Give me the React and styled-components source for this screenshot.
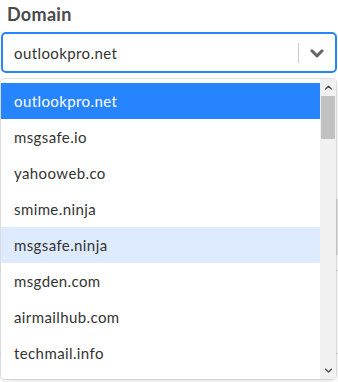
import styled, { createGlobalStyle } from "styled-components";

const GlobalStyle = createGlobalStyle`
    html, body {
        margin: 0;
        padding: 0;
        background: #ffffff;
        font-family: Lato, "Open Sans", sans-serif;
    }
`;

const OPTIONS = [
    "outlookpro.net",
    "msgsafe.io",
    "yahooweb.co",
    "smime.ninja",
    "msgsafe.ninja",
    "msgden.com",
    "airmailhub.com",
    "techmail.info",
];

const StPage = styled.div`
    position: relative;
    width: 338px;
    height: 382px;
    overflow: hidden;
`;

const StField = styled.div`
    display: flex;
    flex-direction: column;
    padding: 3px 1px 0 1px;
`;

const StLabel = styled.div`
    font-size: 18px;
    font-weight: 700;
    letter-spacing: 0.3px;
    color: #4a4a4a;
    padding-left: 6px;
    height: 29px;
    line-height: 22px;
`;

const StControl = styled.div`
    display: flex;
    flex-direction: row;
    align-items: center;
    height: 37px;
    border: 2px solid #2684ff;
    border-radius: 5px;
    background: #ffffff;
`;

const StValue = styled.div`
    flex: 1;
    padding-left: 11px;
    font-size: 15px;
    letter-spacing: 0.4px;
    color: #333333;
`;

const StSeparator = styled.div`
    width: 1px;
    height: 20px;
    background: #cccccc;
`;

const StIndicator = styled.div`
    display: flex;
    align-items: center;
    justify-content: center;
    width: 36px;
    color: #666666;
`;

const StUnder = styled.div`
    display: flex;
    flex-direction: column;
    padding-top: 126px;
`;

const StUnderBox = styled.div`
    height: 54px;
    margin-left: 150px;
    border: 1px solid #dddddd;
    border-right: 3px solid #e4e4e4;
`;

const StUnderLine = styled.div`
    height: 1px;
    margin-top: ${(props) => props.$gap}px;
    background: #e0e0e0;
`;

const StMenu = styled.div`
    position: absolute;
    left: 1px;
    top: 79px;
    width: 335px;
    height: 300px;
    display: flex;
    flex-direction: row;
    background: #ffffff;
    border-radius: 4px;
    box-shadow: 0 0 0 1px rgba(0, 0, 0, 0.1), 0 4px 11px rgba(0, 0, 0, 0.1);
    overflow: hidden;
`;

const StList = styled.div`
    flex: 1;
    padding-top: 4px;
    overflow: hidden;
`;

const StOption = styled.div`
    height: 36px;
    display: flex;
    align-items: center;
    padding-left: 13px;
    font-size: 15px;
    letter-spacing: 0.4px;
    color: ${(props) => (props.$selected ? "#ffffff" : "#333333")};
    background: ${(props) =>
        props.$selected ? "#2684ff" : props.$focused ? "#deebff" : "transparent"};
`;

const StScrollbar = styled.div`
    width: 16px;
    display: flex;
    flex-direction: column;
    background: #f1f1f1;
`;

const StScrollArrow = styled.div`
    height: 17px;
    display: flex;
    align-items: center;
    justify-content: center;
    color: #505050;
`;

const StThumb = styled.div`
    height: 43px;
    margin: 0 1px;
    background: #c1c1c1;
`;

const StTrack = styled.div`
    flex: 1;
`;

const Chevron = ({ up, size = 14, stroke = 2.4 }) => (
    <svg width={size} height={size} viewBox="0 0 14 14" fill="none">
        <path
            d={up ? "M2.5 9.5 L7 5 L11.5 9.5" : "M2.5 5 L7 9.5 L11.5 5"}
            stroke="currentColor"
            strokeWidth={stroke}
            strokeLinecap="round"
            strokeLinejoin="round"
        />
    </svg>
);

const App = () => {
    return (
        <>
            <GlobalStyle />
            <StPage>
                <StField>
                    <StLabel>Domain</StLabel>
                    <StControl>
                        <StValue>outlookpro.net</StValue>
                        <StSeparator />
                        <StIndicator>
                            <Chevron size={16} stroke={2.6} />
                        </StIndicator>
                    </StControl>
                </StField>
                <StUnder>
                    <StUnderBox />
                    <StUnderLine $gap={15} />
                    <StUnderLine $gap={82} />
                </StUnder>
                <StMenu>
                    <StList>
                        {OPTIONS.map((option, idx) => (
                            <StOption key={option} $selected={idx === 0} $focused={idx === 4}>
                                {option}
                            </StOption>
                        ))}
                    </StList>
                    <StScrollbar>
                        <StScrollArrow>
                            <Chevron up size={9} stroke={2.2} />
                        </StScrollArrow>
                        <StThumb />
                        <StTrack />
                        <StScrollArrow>
                            <Chevron size={9} stroke={2.2} />
                        </StScrollArrow>
                    </StScrollbar>
                </StMenu>
            </StPage>
        </>
    );
};

export default App;
